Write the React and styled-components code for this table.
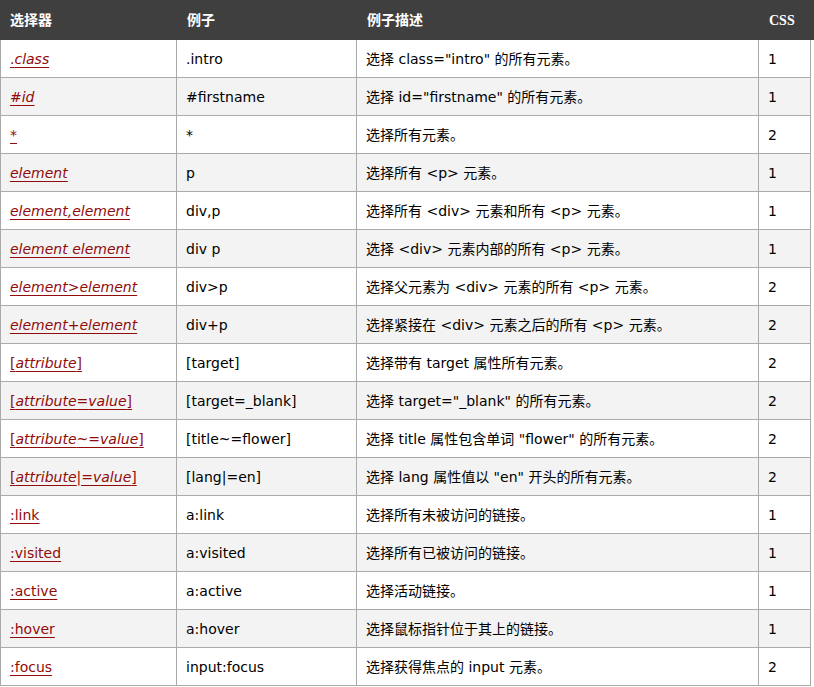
import React from 'react';
import styled, { createGlobalStyle } from 'styled-components';

const GlobalStyle = createGlobalStyle`
  html, body {
    margin: 0;
    padding: 0;
    background: #fff;
  }
  body {
    font-family: "DejaVu Sans", "Noto Sans CJK SC", sans-serif;
    color: #000;
  }
`;

const Table = styled.table`
  border-collapse: separate;
  border-spacing: 0;
  table-layout: fixed;
  width: 811px;
  font-size: 14px;
  line-height: 17px;
`;

const HeadRow = styled.tr`
  height: 40px;
  background: #3f3f3f;
`;

const HeadCell = styled.th`
  padding: 0 10px;
  text-align: left;
  vertical-align: middle;
  color: #fff;
  font-family: "Liberation Serif", "Noto Sans CJK SC", serif;
  font-size: 14px;
  font-weight: bold;
  white-space: nowrap;
  &:last-child {
    box-shadow: 4px 0 0 #3f3f3f;
  }
`;

const Row = styled.tr`
  height: 38px;
  background: ${p => (p.$alt ? '#f3f3f3' : '#fff')};
`;

const Cell = styled.td`
  padding: 1px 9px 0;
  vertical-align: middle;
  border-right: 1px solid #aaa;
  border-bottom: 1px solid #aaa;
  white-space: nowrap;
  &:first-child {
    border-left: 1px solid #aaa;
  }
`;

const SelectorLink = styled.a`
  color: #900b09;
  text-decoration: underline;
  text-underline-offset: 3px;
  cursor: pointer;
`;

const Em = styled.i`
  font-style: italic;
`;

const rows = [
  [<>.<Em>class</Em></>, '.intro', '选择 class="intro" 的所有元素。', 1],
  [<>#<Em>id</Em></>, '#firstname', '选择 id="firstname" 的所有元素。', 1],
  ['*', '*', '选择所有元素。', 2],
  [<Em>element</Em>, 'p', '选择所有 <p> 元素。', 1],
  [<Em>element,element</Em>, 'div,p', '选择所有 <div> 元素和所有 <p> 元素。', 1],
  [<Em>element element</Em>, 'div p', '选择 <div> 元素内部的所有 <p> 元素。', 1],
  [<Em>element&gt;element</Em>, 'div>p', '选择父元素为 <div> 元素的所有 <p> 元素。', 2],
  [<Em>element+element</Em>, 'div+p', '选择紧接在 <div> 元素之后的所有 <p> 元素。', 2],
  [<>[<Em>attribute</Em>]</>, '[target]', '选择带有 target 属性所有元素。', 2],
  [<>[<Em>attribute</Em>=<Em>value</Em>]</>, '[target=_blank]', '选择 target="_blank" 的所有元素。', 2],
  [<>[<Em>attribute</Em>~=<Em>value</Em>]</>, '[title~=flower]', '选择 title 属性包含单词 "flower" 的所有元素。', 2],
  [<>[<Em>attribute</Em>|=<Em>value</Em>]</>, '[lang|=en]', '选择 lang 属性值以 "en" 开头的所有元素。', 2],
  [':link', 'a:link', '选择所有未被访问的链接。', 1],
  [':visited', 'a:visited', '选择所有已被访问的链接。', 1],
  [':active', 'a:active', '选择活动链接。', 1],
  [':hover', 'a:hover', '选择鼠标指针位于其上的链接。', 1],
  [':focus', 'input:focus', '选择获得焦点的 input 元素。', 2],
];

export default function App() {
  return (
    <>
      <GlobalStyle />
      <Table>
        <colgroup>
          <col style={{ width: 177 }} />
          <col style={{ width: 180 }} />
          <col style={{ width: 402 }} />
          <col style={{ width: 52 }} />
        </colgroup>
        <thead>
          <HeadRow>
            <HeadCell>选择器</HeadCell>
            <HeadCell>例子</HeadCell>
            <HeadCell>例子描述</HeadCell>
            <HeadCell>CSS</HeadCell>
          </HeadRow>
        </thead>
        <tbody>
          {rows.map(([sel, example, desc, level], i) => (
            <Row key={i} $alt={i % 2 === 1}>
              <Cell>
                <SelectorLink>{sel}</SelectorLink>
              </Cell>
              <Cell>{example}</Cell>
              <Cell>{desc}</Cell>
              <Cell>{level}</Cell>
            </Row>
          ))}
        </tbody>
      </Table>
    </>
  );
}
